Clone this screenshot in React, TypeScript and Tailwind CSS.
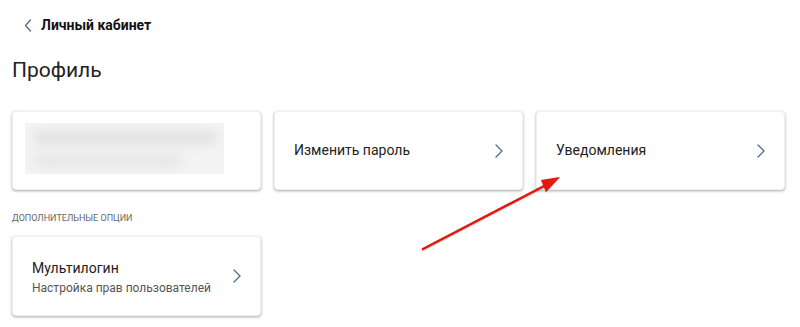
import React from "react";

const Chevron = ({ className = "" }: { className?: string }) => (
  <svg width="8" height="14" viewBox="0 0 8 14" fill="none" className={className}>
    <path d="M1 1l6 6-6 6" stroke="#5b6f8c" strokeWidth="1.4" strokeLinecap="round" strokeLinejoin="round" />
  </svg>
);

const Card: React.FC<{ children: React.ReactNode }> = ({ children }) => (
  <div className="h-[79px] w-[249px] rounded-[4px] bg-white shadow-[0_1px_3px_rgba(0,0,0,0.35)] border border-[#f0f0f0]">
    {children}
  </div>
);

export default function App() {
  return (
    <div className="relative h-[327px] w-[800px] bg-white font-['Roboto',sans-serif] text-[#1f1f1f] overflow-hidden">
      <div className="flex items-center gap-[9px] pl-[24px] pt-[16px] h-[34px]">
        <svg width="8" height="13" viewBox="0 0 8 13" fill="none">
          <path d="M6.5 1L1.5 6.5l5 5.5" stroke="#5b6f8c" strokeWidth="1.4" strokeLinecap="round" strokeLinejoin="round" />
        </svg>
        <span className="text-[14px] font-bold text-[#111]">Личный кабинет</span>
      </div>
      <h1 className="pl-[12px] pt-[21px] text-[21px] leading-[30px] text-[#222]">Профиль</h1>

      <div className="flex gap-[13px] pl-[12px] pt-[26px]">
        <Card>
          <div className="ml-[12px] mt-[11px] h-[51px] w-[199px] bg-[#f4f4f4] flex flex-col justify-center gap-[10px] px-[8px] overflow-hidden">
            <div className="h-[13px] w-[185px] rounded-full bg-[#e0e0e0] blur-[6px]" />
            <div className="h-[13px] w-[150px] rounded-full bg-[#e5e5e5] blur-[6px]" />
          </div>
        </Card>
        <Card>
          <div className="flex h-full items-center justify-between pl-[19px] pr-[19px]">
            <span className="text-[14px] text-[#222]">Изменить пароль</span>
            <Chevron />
          </div>
        </Card>
        <Card>
          <div className="flex h-full items-center justify-between pl-[19px] pr-[19px]">
            <span className="text-[14px] text-[#222]">Уведомления</span>
            <Chevron />
          </div>
        </Card>
      </div>

      <div className="pl-[12px] pt-[22px] text-[9px] uppercase text-[#666]">Дополнительные опции</div>

      <div className="pl-[12px] pt-[10px]">
        <div className="h-[80px] w-[249px] rounded-[4px] bg-white shadow-[0_1px_3px_rgba(0,0,0,0.35)] border border-[#f0f0f0] flex items-center justify-between pl-[19px] pr-[19px]">
          <div className="flex flex-col gap-[2px] pt-[4px]">
            <span className="text-[14px] leading-[18px] text-[#222]">Мультилогин</span>
            <span className="text-[12px] leading-[18px] text-[#555]">Настройка прав пользователей</span>
          </div>
          <Chevron />
        </div>
      </div>

      <svg className="absolute left-0 top-0 pointer-events-none" width="800" height="327">
        <defs>
          <filter id="sh" x="-10%" y="-10%" width="120%" height="120%">
            <feDropShadow dx="0" dy="0.5" stdDeviation="0.6" floodColor="#000" floodOpacity="0.35" />
          </filter>
        </defs>
        <g filter="url(#sh)">
          <line x1="423" y1="249" x2="548" y2="184" stroke="#e8130e" strokeWidth="2.5" strokeLinecap="round" />
          <polygon points="560,177 546,192 541,180" fill="#e8130e" />
        </g>
      </svg>
    </div>
  );
}
